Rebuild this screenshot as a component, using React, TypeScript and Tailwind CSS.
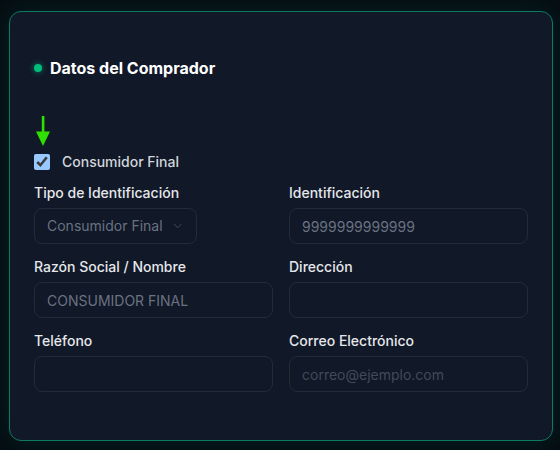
import { ChevronDown } from "lucide-react";

const font = { fontFamily: "Inter, 'Noto Sans', sans-serif" };

function Label({ children }: { children: React.ReactNode }) {
  return (
    <label className="mb-[5px] block text-sm font-medium leading-5 text-gray-200">
      {children}
    </label>
  );
}

function TextField({
  label,
  value,
  placeholder,
}: {
  label: string;
  value?: string;
  placeholder?: string;
}) {
  return (
    <div className="flex flex-col">
      <Label>{label}</Label>
      <input
        readOnly
        defaultValue={value}
        placeholder={placeholder}
        className="h-9 w-full rounded-lg border border-[#232b38] bg-[#111827] px-3 text-sm text-gray-500 outline-none placeholder:text-[#414a58]"
      />
    </div>
  );
}

export default function App() {
  return (
    <div
      className="min-h-[450px] w-[560px] bg-[#050d13] pl-[9px] pt-[11px]"
      style={font}
    >
      <div className="relative h-[430px] w-[544px] rounded-xl border border-[#0f7a63] bg-[#111827] px-6 pt-[44px] shadow-[0_0_28px_rgba(16,185,129,0.12)]">
        {/* section heading */}
        <div className="flex items-center gap-2">
          <span className="h-2 w-2 rounded-full bg-emerald-500 shadow-[0_0_6px_rgba(16,185,129,0.6)]" />
          <h2 className="text-base font-bold leading-6 text-white">
            Datos del Comprador
          </h2>
        </div>

        {/* pointer arrow */}
        <svg
          className="absolute left-[25px] top-[104px]"
          width="16"
          height="31"
          viewBox="0 0 16 31"
        >
          <rect x="6.8" y="0" width="2.6" height="17" fill="#2fe000" />
          <polygon points="1,15.5 15,15.5 8,30" fill="#2fe000" />
        </svg>

        {/* consumer toggle */}
        <div className="mt-[72px] flex h-5 items-center gap-3">
          <input
            type="checkbox"
            checked
            readOnly
            className="m-0 h-4 w-4 [color-scheme:dark]"
          />
          <span className="text-sm font-medium text-gray-300">
            Consumidor Final
          </span>
        </div>

        <div className="mt-[11px] grid grid-cols-2 gap-x-4 gap-y-[13px]">
          <div className="flex flex-col">
            <Label>Tipo de Identificación</Label>
            <div className="inline-flex h-9 w-[163px] items-center gap-2 rounded-lg border border-[#232b38] bg-[#111827] px-3 text-sm text-gray-500">
              <span className="whitespace-nowrap">Consumidor Final</span>
              <ChevronDown size={16} strokeWidth={1.5} className="text-gray-600" />
            </div>
          </div>
          <TextField label="Identificación" value="9999999999999" />
          <TextField label="Razón Social / Nombre" value="CONSUMIDOR FINAL" />
          <TextField label="Dirección" />
          <TextField label="Teléfono" />
          <TextField
            label="Correo Electrónico"
            placeholder="correo@ejemplo.com"
          />
        </div>
      </div>
    </div>
  );
}
